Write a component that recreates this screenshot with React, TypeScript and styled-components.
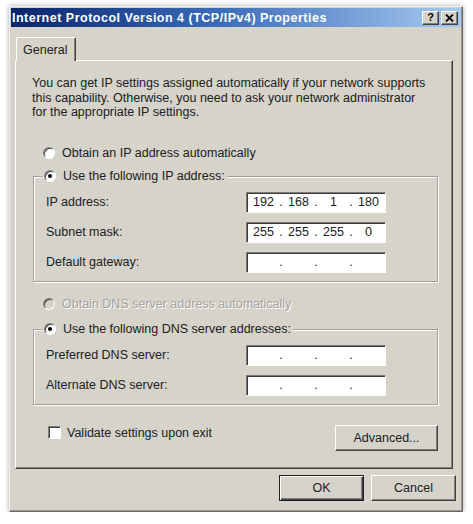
import React from "react";
import styled, { createGlobalStyle } from "styled-components";

const FACE = "#d6d3cb";
const TEXT = "#202020";

const Global = createGlobalStyle`
  html, body { margin: 0; padding: 0; background: #ffffff; }
  body { font-family: "Liberation Sans", Arial, sans-serif; font-size: 12px; color: ${TEXT}; }
  * { box-sizing: border-box; }
`;

const Window = styled.div`
  margin: 6px 0 0 9px;
  width: 454px;
  height: 506px;
  background: ${FACE};
  border: 1px solid;
  border-color: #f2f0ea #6a6965 #6a6965 #f2f0ea;
  padding: 1px;
  box-shadow: 0 0 5px rgba(0, 0, 0, 0.35), inset -1px -1px 0 #9a9892;
  display: flex;
  flex-direction: column;
`;

const TitleBar = styled.div`
  height: 19px;
  background: linear-gradient(to right, #0a246a 0%, #3a6ab8 45%, #a6caf0 100%);
  display: flex;
  align-items: center;
  padding: 0 3px 0 1px;
`;

const TitleText = styled.div`
  flex: 1;
  color: #ffffff;
  font-weight: bold;
  font-size: 12.5px;
  letter-spacing: 0.5px;
  white-space: nowrap;
`;

const CaptionButton = styled.div`
  width: 17px;
  height: 14px;
  margin-left: 2px;
  background: ${FACE};
  border: 1px solid;
  border-color: #ffffff #404040 #404040 #ffffff;
  box-shadow: inset -1px -1px 0 #808080;
  display: flex;
  align-items: center;
  justify-content: center;
  font-weight: bold;
  font-size: 11px;
  line-height: 1;
  color: #000;
`;

const Content = styled.div`
  flex: 1;
  padding: 10px 7px 0 4px;
  display: flex;
  flex-direction: column;
`;

const TabStrip = styled.div`
  display: flex;
  padding-left: 1px;
  position: relative;
  z-index: 1;
  margin-bottom: -1px;
`;

const Tab = styled.div`
  width: 60px;
  height: 24px;
  background: ${FACE};
  border: 1px solid;
  border-bottom: none;
  border-color: #ffffff #404040 transparent #ffffff;
  border-radius: 2px 2px 0 0;
  box-shadow: inset -1px 0 0 #808080;
  display: flex;
  align-items: center;
  padding-left: 6px;
  font-size: 12.5px;
`;

const Panel = styled.div`
  width: 438px;
  height: 409px;
  border: 1px solid;
  border-color: #ffffff #404040 #404040 #ffffff;
  box-shadow: inset -1px -1px 0 #808080;
  padding: 15px 16px 0 16px;
  display: flex;
  flex-direction: column;
`;

const Description = styled.p`
  margin: 0;
  line-height: 14.5px;
  font-size: 12.5px;
`;

const RadioRow = styled.label<{ $disabled?: boolean; $top?: number }>`
  display: flex;
  align-items: center;
  height: 16px;
  margin-top: ${(p) => p.$top ?? 0}px;
  padding-left: 11px;
  gap: 7px;
  font-size: 12.5px;
  color: ${(p) => (p.$disabled ? "#a5a39d" : TEXT)};
  text-shadow: ${(p) => (p.$disabled ? "1px 1px 0 #ffffff" : "none")};
  background: ${FACE};
`;

const RadioDot = styled.span<{ $checked?: boolean; $disabled?: boolean }>`
  width: 12px;
  height: 12px;
  border-radius: 50%;
  border: 1px solid;
  border-color: #808080 #ffffff #ffffff #808080;
  box-shadow: inset 1px 1px 0 #404040;
  background: ${(p) => (p.$disabled ? FACE : "#ffffff")};
  display: flex;
  align-items: center;
  justify-content: center;
  flex: none;
  &::after {
    content: "";
    width: 4px;
    height: 4px;
    border-radius: 50%;
    background: #000;
    display: ${(p) => (p.$checked ? "block" : "none")};
  }
`;

const GroupBox = styled.div<{ $top: number }>`
  position: relative;
  margin: ${(p) => p.$top}px 0 0 1px;
  width: 405px;
  border: 1px solid #a09e98;
  box-shadow: 1px 1px 0 #ffffff, inset 1px 1px 0 #ffffff;
  padding: 15px 0 8px 12px;
  display: flex;
  flex-direction: column;
  gap: 9px;
`;

const Legend = styled.div`
  position: absolute;
  top: -9px;
  left: 8px;
  padding-right: 2px;
  background: ${FACE};
`;

const FieldRow = styled.div`
  display: flex;
  align-items: center;
  height: 21px;
`;

const FieldLabel = styled.div`
  width: 200px;
  font-size: 12.5px;
`;

const IpBox = styled.div`
  width: 140px;
  height: 21px;
  background: #ffffff;
  border: 1px solid;
  border-color: #7c7b77 #ffffff #ffffff #7c7b77;
  box-shadow: inset 1px 1px 0 #3a3a3a;
  display: flex;
  align-items: center;
  padding-left: 1px;
  font-size: 12.5px;
`;

const Octet = styled.span`
  width: 31px;
  text-align: center;
`;

const Dot = styled.span`
  width: 4px;
  text-align: center;
`;

const BottomRow = styled.div`
  display: flex;
  align-items: flex-start;
  justify-content: space-between;
  margin-top: 20px;
  padding: 0 0 0 16px;
  width: 406px;
`;

const CheckLabel = styled.label`
  display: flex;
  align-items: center;
  gap: 6px;
  margin-top: 1px;
  font-size: 12.5px;
`;

const CheckBox = styled.span`
  width: 13px;
  height: 13px;
  background: #ffffff;
  border: 1px solid;
  border-color: #808080 #ffffff #ffffff #808080;
  box-shadow: inset 1px 1px 0 #404040;
`;

const Button = styled.div<{ $w: number; $default?: boolean }>`
  width: ${(p) => p.$w}px;
  height: 26px;
  background: ${FACE};
  border: 1px solid;
  border-color: ${(p) => (p.$default ? "#202020" : "#ffffff #404040 #404040 #ffffff")};
  box-shadow: ${(p) =>
    p.$default
      ? "inset 1px 1px 0 #ffffff, inset -1px -1px 0 #404040, inset -2px -2px 0 #808080"
      : "inset -1px -1px 0 #808080"};
  display: flex;
  align-items: center;
  justify-content: center;
  font-size: 12.5px;
`;

const Footer = styled.div`
  display: flex;
  justify-content: flex-end;
  gap: 7px;
  margin: 6px -2px 0 0;
`;

type IpProps = { value?: string[] };

const IpInput: React.FC<IpProps> = ({ value }) => {
  const v = value ?? ["", "", "", ""];
  return (
    <IpBox>
      <Octet>{v[0]}</Octet>
      <Dot>.</Dot>
      <Octet>{v[1]}</Octet>
      <Dot>.</Dot>
      <Octet>{v[2]}</Octet>
      <Dot>.</Dot>
      <Octet>{v[3]}</Octet>
    </IpBox>
  );
};

const Field: React.FC<{ label: string; value?: string[] }> = ({ label, value }) => (
  <FieldRow>
    <FieldLabel>{label}</FieldLabel>
    <IpInput value={value} />
  </FieldRow>
);

const CloseIcon = () => (
  <svg width="9" height="8" viewBox="0 0 9 8">
    <path d="M1 0.5 L8 7.5 M8 0.5 L1 7.5" stroke="#000" strokeWidth="1.8" />
  </svg>
);

export default function App() {
  return (
    <>
      <Global />
      <Window>
        <TitleBar>
          <TitleText>Internet Protocol Version 4 (TCP/IPv4) Properties</TitleText>
          <CaptionButton>?</CaptionButton>
          <CaptionButton>
            <CloseIcon />
          </CaptionButton>
        </TitleBar>
        <Content>
          <TabStrip>
            <Tab>General</Tab>
          </TabStrip>
          <Panel>
            <Description>
              You can get IP settings assigned automatically if your network supports
              <br />
              this capability. Otherwise, you need to ask your network administrator
              <br />
              for the appropriate IP settings.
            </Description>
            <RadioRow $top={25}>
              <RadioDot />
              Obtain an IP address automatically
            </RadioRow>
            <GroupBox $top={15}>
              <Legend>
                <RadioRow style={{ paddingLeft: 2 }}>
                  <RadioDot $checked />
                  Use the following IP address:
                </RadioRow>
              </Legend>
              <Field label="IP address:" value={["192", "168", "1", "180"]} />
              <Field label="Subnet mask:" value={["255", "255", "255", "0"]} />
              <Field label="Default gateway:" />
            </GroupBox>
            <RadioRow $top={14} $disabled>
              <RadioDot $disabled />
              Obtain DNS server address automatically
            </RadioRow>
            <GroupBox $top={17}>
              <Legend>
                <RadioRow style={{ paddingLeft: 2 }}>
                  <RadioDot $checked />
                  Use the following DNS server addresses:
                </RadioRow>
              </Legend>
              <Field label="Preferred DNS server:" />
              <Field label="Alternate DNS server:" />
            </GroupBox>
            <BottomRow>
              <CheckLabel>
                <CheckBox />
                Validate settings upon exit
              </CheckLabel>
              <Button $w={103}>Advanced...</Button>
            </BottomRow>
          </Panel>
          <Footer>
            <Button $w={85} $default>
              OK
            </Button>
            <Button $w={85}>Cancel</Button>
          </Footer>
        </Content>
      </Window>
    </>
  );
}
